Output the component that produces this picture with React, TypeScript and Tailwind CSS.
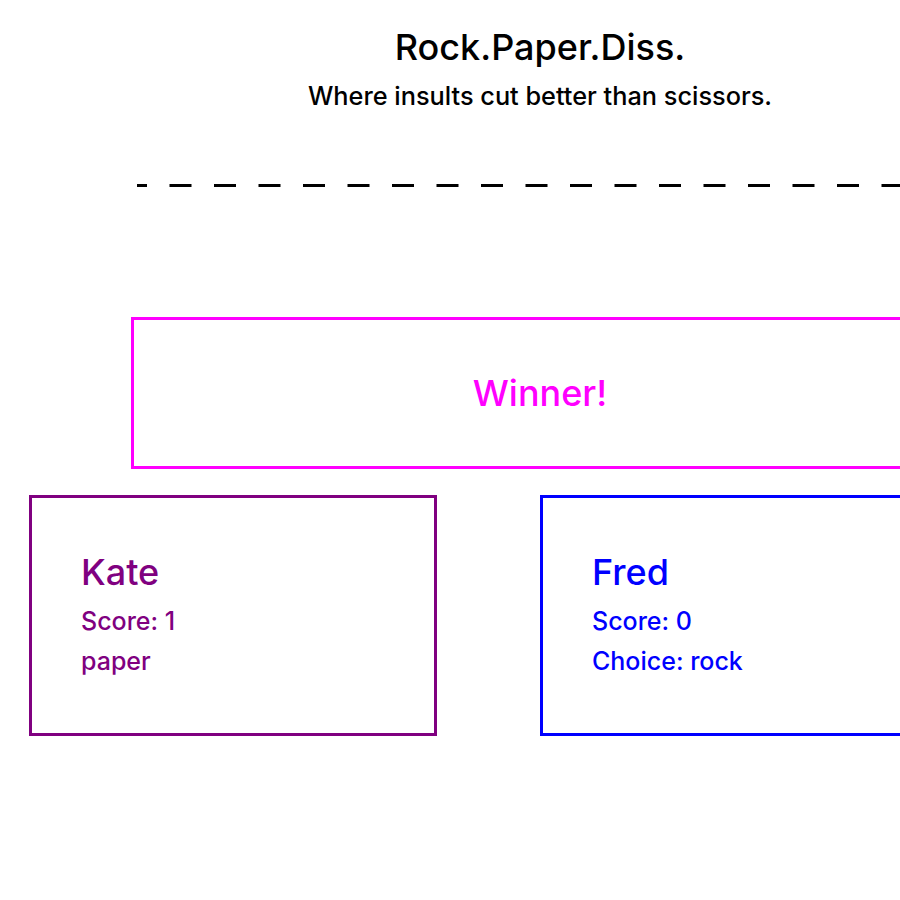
import React from "react";

function Card({ name, score, choice, color }: { name: string; score: number; choice: string; color: string }) {
  return (
    <div className={`w-[408px] h-[241px] border-[3px] ${color} pl-[49px] pt-[52px]`}>
      <div className="text-[36px] leading-[44px] font-medium">{name}</div>
      <div className="mt-[7px] text-[25px] leading-[40px] font-medium">Score: {score}</div>
      <div className="text-[25px] leading-[40px] font-medium">{choice}</div>
    </div>
  );
}

export default function App() {
  return (
    <div className="w-[900px] h-[900px] overflow-hidden bg-white" style={{ fontFamily: "Inter, 'Noto Sans', sans-serif" }}>
      <div className="w-[1080px]">
        <header className="pt-[25px] flex flex-col items-center text-black">
          <h1 className="text-[36px] leading-[44px] font-medium">Rock.Paper.Diss.</h1>
          <p className="mt-[11px] text-[25.3px] leading-[32px] font-medium">Where insults cut better than scissors.</p>
        </header>
        <div className="mt-[72px] ml-[137px] h-[3px]">
          <svg width="943" height="3" className="block">
            <line x1="0" y1="1.5" x2="943" y2="1.5" stroke="#000" strokeWidth="3" strokeDasharray="22 22.5" strokeDashoffset="12" />
          </svg>
        </div>
        <div className="mt-[130px] ml-[131px] w-[818px] h-[152px] border-[3px] border-[#ff00ff] flex items-center justify-center">
          <span className="text-[36px] font-medium text-[#ff00ff]">Winner!</span>
        </div>
        <div className="mt-[26px] flex">
          <div className="ml-[29px]">
            <Card name="Kate" score={1} choice="paper" color="border-[#800080] text-[#800080]" />
          </div>
          <div className="ml-[103px]">
            <Card name="Fred" score={0} choice="Choice: rock" color="border-[#0000ff] text-[#0000ff]" />
          </div>
        </div>
      </div>
    </div>
  );
}
